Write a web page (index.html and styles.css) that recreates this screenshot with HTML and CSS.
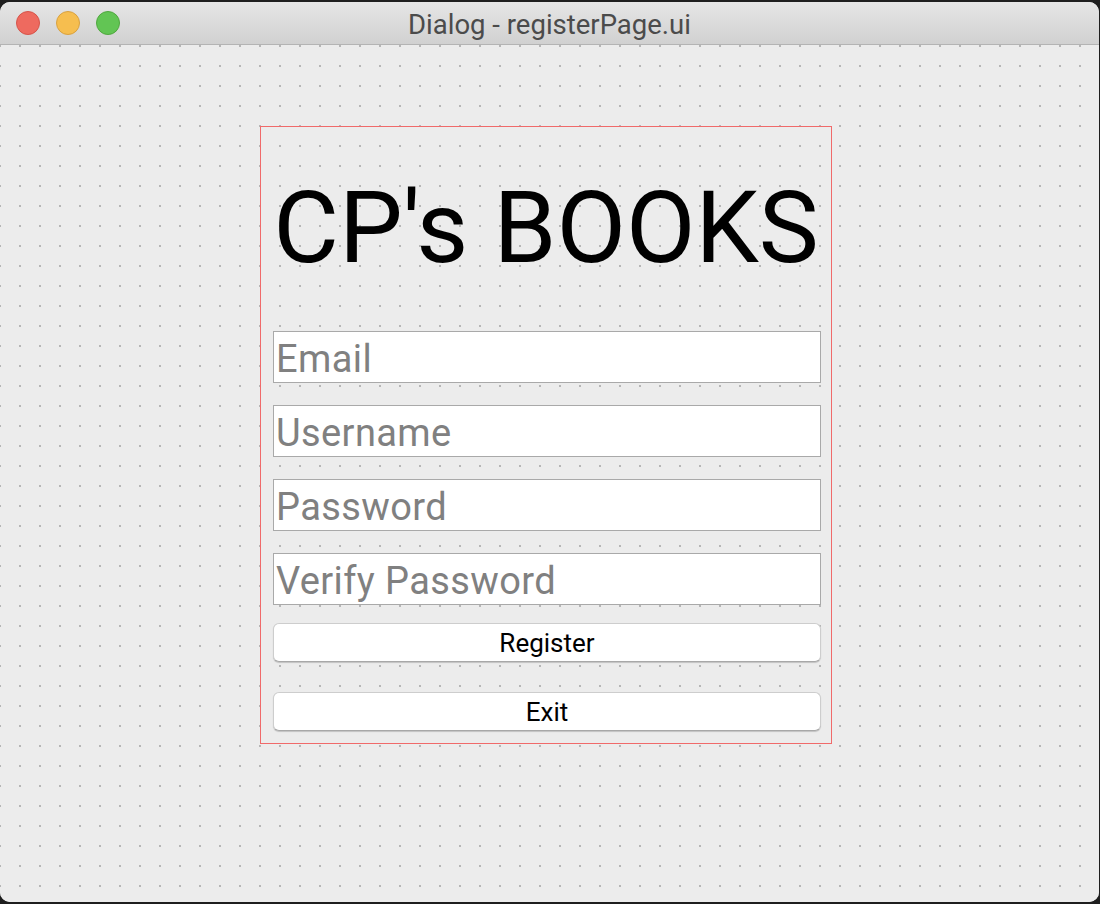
FILE: index.html
```html
<!DOCTYPE html>
<html>
<head>
<meta charset="utf-8">
<title>Dialog - registerPage.ui</title>
<link rel="stylesheet" href="styles.css">
</head>
<body>
<div class="window">
  <div class="titlebar">
    <div class="lights">
      <span class="light red"></span>
      <span class="light yellow"></span>
      <span class="light green"></span>
    </div>
    <div class="title">Dialog - registerPage.ui</div>
    <div class="spacer"></div>
  </div>
  <div class="canvas">
    <div class="frame">
      <div class="brand">CP's BOOKS</div>
      <div class="fields">
        <input class="field" type="text" placeholder="Email">
        <input class="field" type="text" placeholder="Username">
        <input class="field" type="password" placeholder="Password">
        <input class="field" type="password" placeholder="Verify Password">
      </div>
      <button class="btn register">Register</button>
      <button class="btn exit">Exit</button>
    </div>
  </div>
</div>
</body>
</html>
```
FILE: styles.css
```css
html, body {
  margin: 0;
  padding: 0;
  background: #1e1e1e;
  height: 904px;
  overflow: hidden;
}

.window {
  margin: 2px 1px 0 0;
  height: 900px;
  border-radius: 10px;
  overflow: hidden;
  background: #ececec;
  display: flex;
  flex-direction: column;
}

.titlebar {
  height: 42px;
  flex: none;
  border-bottom: 1px solid #b4b4b4;
  background: linear-gradient(#e6e6e6, #d1d1d1);
  display: grid;
  grid-template-columns: 1fr auto 1fr;
  align-items: center;
}

.lights {
  display: flex;
  gap: 16px;
  padding-left: 16px;
}

.light {
  width: 24px;
  height: 24px;
  border-radius: 50%;
  box-sizing: border-box;
}
.red { background: #ee6a5f; border: 1px solid #d5544a; }
.yellow { background: #f6be4f; border: 1px solid #d8a140; }
.green { background: #62c554; border: 1px solid #50a73f; }

.title {
  font-family: Roboto, "Liberation Sans", sans-serif;
  font-size: 27.5px;
  color: #4b4b4b;
  padding-top: 3px;
}

.canvas {
  flex: 1;
  background-color: #ececec;
  background-image: conic-gradient(from 270deg at 2px 2px, #b6b6b6 25%, transparent 0);
  background-size: 20px 20px;
  background-position: 19px 0;
  padding-left: 260px;
  padding-top: 81px;
}

.frame {
  width: 572px;
  height: 618px;
  box-sizing: border-box;
  border: 1px solid #f06a6a;
  padding: 51px 10px 0 12px;
  display: flex;
  flex-direction: column;
}

.brand {
  font-family: Roboto, "Liberation Sans", sans-serif;
  font-size: 101px;
  line-height: 100px;
  height: 100px;
  color: #000;
  text-align: center;
  white-space: nowrap;
  margin-left: -12px;
  margin-right: -10px;
}

.fields {
  margin-top: 53px;
  display: flex;
  flex-direction: column;
  gap: 22px;
}

.field {
  display: block;
  width: 548px;
  height: 52px;
  box-sizing: border-box;
  margin: 0;
  border: 1px solid #a9a9a9;
  border-radius: 0;
  background: #fff;
  padding: 3px 2px 0 2px;
  font-family: Roboto, "Liberation Sans", sans-serif;
  font-size: 38px;
  letter-spacing: 0.4px;
  color: #000;
  outline: none;
}
.field::placeholder {
  color: #808080;
  opacity: 1;
}

.btn {
  display: block;
  width: 548px;
  height: 39px;
  box-sizing: border-box;
  margin: 0;
  padding: 0;
  background: #fff;
  border: 1px solid #cdcdcd;
  border-bottom-color: #a8a8a8;
  border-radius: 6px;
  box-shadow: 0 1px 1px rgba(0, 0, 0, 0.18);
  font-family: Roboto, "Liberation Sans", sans-serif;
  font-size: 26px;
  color: #000;
  text-align: center;
}

.register { margin-top: 18px; }
.exit { margin-top: 30px; }
```
